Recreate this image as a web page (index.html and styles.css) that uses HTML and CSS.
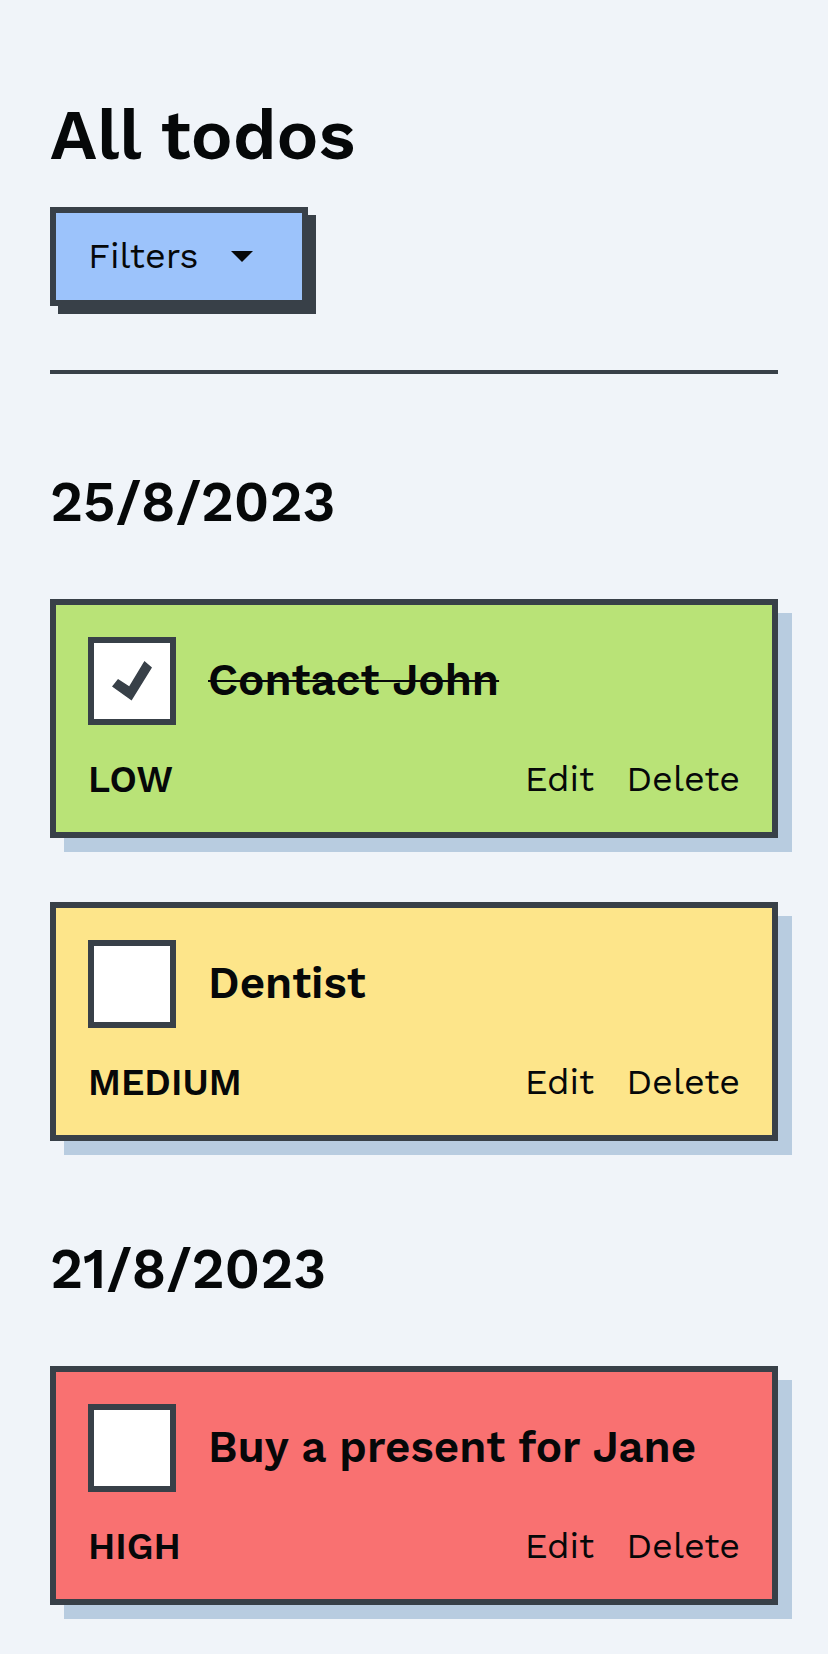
FILE: index.html
```html
<!DOCTYPE html>
<html lang="en">
<head>
<meta charset="utf-8">
<meta name="viewport" content="width=device-width, initial-scale=1">
<title>All todos</title>
<link rel="stylesheet" href="styles.css">
</head>
<body>
<main class="page">
  <header class="header">
    <h1 class="title">All todos</h1>
    <button class="filters" type="button">Filters
      <svg class="caret" viewBox="0 0 22 11" aria-hidden="true"><path d="M0 0h22L11 11z"/></svg>
    </button>
  </header>

  <section class="day">
    <h2 class="date">25/8/2023</h2>
    <article class="card low">
      <div class="task">
        <input class="check" type="checkbox" id="todo-1" checked>
        <label class="name" for="todo-1">Contact John</label>
      </div>
      <div class="meta">
        <strong class="priority">LOW</strong>
        <button class="action" type="button">Edit</button>
        <button class="action" type="button">Delete</button>
      </div>
    </article>
    <article class="card medium">
      <div class="task">
        <input class="check" type="checkbox" id="todo-2">
        <label class="name" for="todo-2">Dentist</label>
      </div>
      <div class="meta">
        <strong class="priority">MEDIUM</strong>
        <button class="action" type="button">Edit</button>
        <button class="action" type="button">Delete</button>
      </div>
    </article>
  </section>

  <section class="day">
    <h2 class="date">21/8/2023</h2>
    <article class="card high">
      <div class="task">
        <input class="check" type="checkbox" id="todo-3">
        <label class="name" for="todo-3">Buy a present for Jane</label>
      </div>
      <div class="meta">
        <strong class="priority">HIGH</strong>
        <button class="action" type="button">Edit</button>
        <button class="action" type="button">Delete</button>
      </div>
    </article>
  </section>
</main>
</body>
</html>
```
FILE: styles.css
```css
:root {
  --ink: #060809;
  --line: #384048;
  --shadow: #b8cce0;
}

* {
  box-sizing: border-box;
}

body {
  margin: 0;
  background: #f0f4f9;
  color: var(--ink);
  font: 400 36px/45px "Work Sans", Inter, "Liberation Sans", sans-serif;
}

h1,
h2 {
  margin: 0;
  font-weight: 600;
}

button {
  font: inherit;
  color: inherit;
  cursor: pointer;
}

.page {
  padding: 95px 50px 48px;
}

.header {
  display: flex;
  flex-direction: column;
  align-items: flex-start;
  gap: 32px;
  padding-bottom: 64px;
  border-bottom: 4px solid var(--line);
}

.title {
  font-size: 70px;
  line-height: 80px;
}

.filters {
  display: flex;
  align-items: center;
  gap: 32px;
  padding: 21px 49px 21px 32px;
  border: 6px solid var(--line);
  background: #9cc3fb;
  box-shadow: 8px 8px 0 var(--line);
}

.caret {
  width: 22px;
  height: 11px;
  fill: currentColor;
}

.day {
  display: flex;
  flex-direction: column;
  gap: 64px;
  padding-top: 96px;
}

.date {
  font-size: 56px;
  line-height: 65px;
}

.card {
  display: flex;
  flex-direction: column;
  gap: 32px;
  padding: 32px 32px 30px;
  border: 6px solid var(--line);
  box-shadow: 14px 14px 0 var(--shadow);
}

.low {
  background: #b9e377;
}

.medium {
  background: #fde58a;
}

.high {
  background: #f97171;
}

.task,
.meta {
  display: flex;
  align-items: center;
  gap: 32px;
}

.check {
  appearance: none;
  flex: none;
  display: grid;
  place-items: center;
  width: 88px;
  height: 88px;
  margin: 0;
  border: 6px solid var(--line);
  background: #fff;
}

.check:checked::before {
  content: "";
  width: 40px;
  height: 40px;
  background: var(--line);
  clip-path: polygon(0 64%, 15% 45%, 43% 63%, 81% 0, 100% 16%, 49% 99%);
}

.name {
  padding-bottom: 2px;
  font-size: 44px;
  font-weight: 600;
  line-height: 52px;
}

.check:checked + .name {
  text-decoration: line-through 2px;
}

.priority {
  flex: 1;
  font-size: 37px;
  font-weight: 600;
}

.action {
  padding: 0;
  border: 0;
  background: none;
}
```
